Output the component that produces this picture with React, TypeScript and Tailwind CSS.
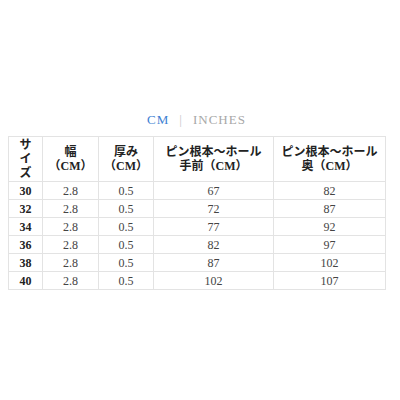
const rows = [
  ['30', '2.8', '0.5', '67', '82'],
  ['32', '2.8', '0.5', '72', '87'],
  ['34', '2.8', '0.5', '77', '92'],
  ['36', '2.8', '0.5', '82', '97'],
  ['38', '2.8', '0.5', '87', '102'],
  ['40', '2.8', '0.5', '102', '107'],
];

const serif = { fontFamily: '"Liberation Serif", "Noto Sans CJK JP", serif' };

export default function App() {
  return (
    <div className="w-[400px] h-[400px] bg-white pt-[110px] pl-[8px]" style={serif}>
      <div className="w-[377px] flex justify-center items-center gap-[10px] text-[13px] tracking-[1px] leading-[16px] h-[20px] mb-[6px]">
        <span className="text-[#3d7fd3]">CM</span>
        <span className="text-[#c8c8c8]">|</span>
        <span className="text-[#a8a8a8]">INCHES</span>
      </div>
      <table className="border-collapse w-[377px] table-fixed text-[#333]">
        <colgroup>
          <col className="w-[34px]" />
          <col className="w-[56px]" />
          <col className="w-[55px]" />
          <col className="w-[120px]" />
          <col className="w-[112px]" />
        </colgroup>
        <thead>
          <tr className="h-[45px]">
            <th className="border border-[#e3e3e3] font-bold text-[12px] leading-[14px] text-[#222] px-[5px]">サイズ</th>
            <th className="border border-[#e3e3e3] font-bold text-[12px] leading-[14px] text-[#222]">幅<br />（CM）</th>
            <th className="border border-[#e3e3e3] font-bold text-[12px] leading-[14px] text-[#222]">厚み<br />（CM）</th>
            <th className="border border-[#e3e3e3] font-bold text-[12px] leading-[14px] text-[#222]">ピン根本〜ホール<br />手前（CM）</th>
            <th className="border border-[#e3e3e3] font-bold text-[12px] leading-[14px] text-[#222]">ピン根本〜ホール<br />奥（CM）</th>
          </tr>
        </thead>
        <tbody>
          {rows.map((r) => (
            <tr key={r[0]} className="h-[18px]">
              {r.map((c, i) => (
                <td
                  key={i}
                  className={`border border-[#e3e3e3] text-center text-[12px] leading-[14px] p-0 ${i === 0 ? 'font-bold text-[#222]' : 'text-[#444]'}`}
                >
                  {c}
                </td>
              ))}
            </tr>
          ))}
        </tbody>
      </table>
    </div>
  );
}
